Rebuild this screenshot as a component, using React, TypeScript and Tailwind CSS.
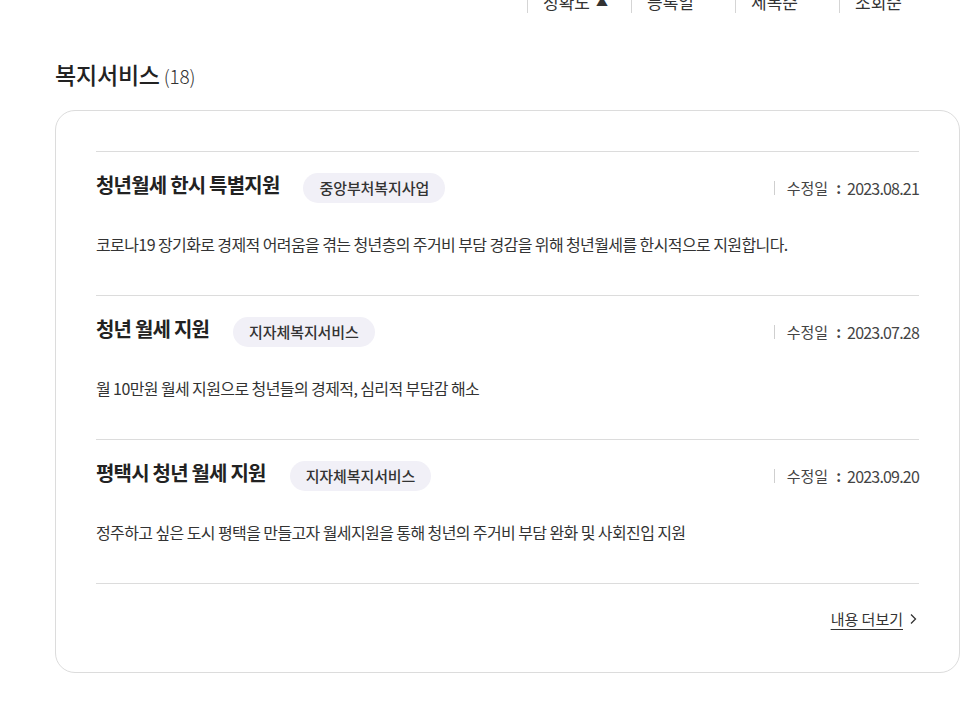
const sorts = [
  { label: '정확도', active: true },
  { label: '등록일' },
  { label: '세목순' },
  { label: '조회순' },
]

const services = [
  {
    title: '청년월세 한시 특별지원',
    tag: '중앙부처복지사업',
    date: '2023.08.21',
    desc: '코로나19 장기화로 경제적 어려움을 겪는 청년층의 주거비 부담 경감을 위해 청년월세를 한시적으로 지원합니다.',
  },
  {
    title: '청년 월세 지원',
    tag: '지자체복지서비스',
    date: '2023.07.28',
    desc: '월 10만원 월세 지원으로 청년들의 경제적, 심리적 부담감 해소',
  },
  {
    title: '평택시 청년 월세 지원',
    tag: '지자체복지서비스',
    date: '2023.09.20',
    desc: '정주하고 싶은 도시 평택을 만들고자 월세지원을 통해 청년의 주거비 부담 완화 및 사회진입 지원',
  },
]

export default function App() {
  return (
    <div
      className="min-h-[712px] bg-white text-[#222]"
      style={{ fontFamily: '"Noto Sans CJK KR", "Noto Sans", sans-serif' }}
    >
      <div className="relative h-[712px] overflow-hidden">
        {/* Sort bar (cut off at top) */}
        <div className="flex justify-end pr-[37px] -mt-[11px]">
          {sorts.map((s) => (
            <div key={s.label} className="flex w-[104px] items-center">
              <span className="h-[22px] w-px bg-[#d5d5d5]" />
              <span className="ml-[15px] flex items-center gap-1.5 text-[17px] text-[#333]">
                {s.label}
                {s.active && <span className="text-[12px]">▲</span>}
              </span>
            </div>
          ))}
        </div>

        <div className="px-[55px] pt-[42px]">
          <h2 className="flex items-baseline text-[23px] font-medium tracking-[-0.2px] text-[#222]">
            복지서비스
            <span className="ml-1 text-[19px] font-light text-[#333]">(18)</span>
          </h2>

          <div className="mt-[19px] w-[905px] rounded-[20px] border border-[#dcdcdc] px-10 pt-10 pb-[41px]">
            {services.map((s) => (
              <div key={s.title} className="h-[144px] border-t border-[#dcdcdc] pt-[18px]">
                <div className="flex items-center">
                  <h3 className="pb-[6px] text-[20px] font-bold tracking-[-0.8px] text-[#222]">{s.title}</h3>
                  <span className="ml-6 flex h-[30px] items-center rounded-full bg-[#f1f0f7] px-4 text-[15px] font-medium tracking-[-0.1px] text-[#333]">
                    {s.tag}
                  </span>
                  <div className="ml-auto flex items-center text-[15px] text-[#444]">
                    <span className="mr-3 h-[14px] w-px bg-[#cfcfcf]" />
                    수정일
                    <span className="ml-2 mr-1.5 font-bold">:</span>
                    <span className="text-[16px] tracking-[-0.8px]">{s.date}</span>
                  </div>
                </div>
                <p className="mt-[26px] text-[16px] tracking-[-0.6px] text-[#333]">{s.desc}</p>
              </div>
            ))}
            <div className="flex justify-end border-t border-[#dcdcdc] pt-[24px]">
              <a href="#" className="flex items-center text-[15px] text-[#333]">
                <span className="underline underline-offset-4">내용 더보기</span>
                <svg width="12" height="14" viewBox="0 0 12 14" className="ml-1" fill="none" stroke="#333" strokeWidth="1.3">
                  <path d="M4 2.5 L8.5 7 L4 11.5" />
                </svg>
              </a>
            </div>
          </div>
        </div>
      </div>
    </div>
  )
}
